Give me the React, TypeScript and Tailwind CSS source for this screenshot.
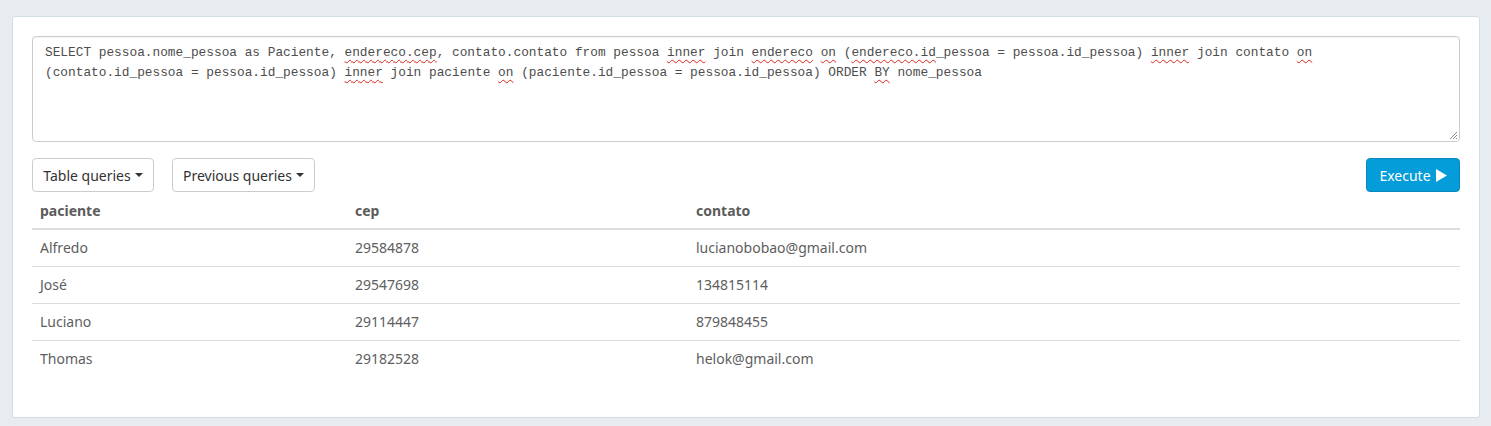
import { ReactNode } from 'react'

const rows = [
  { paciente: 'Alfredo', cep: '29584878', contato: 'lucianobobao@gmail.com' },
  { paciente: 'José', cep: '29547698', contato: '134815114' },
  { paciente: 'Luciano', cep: '29114447', contato: '879848455' },
  { paciente: 'Thomas', cep: '29182528', contato: 'helok@gmail.com' },
]

// palavras com sublinhado do corretor ortográfico
function W({ children }: { children: ReactNode }) {
  return (
    <span className="underline decoration-wavy decoration-[#e0261a] decoration-1 underline-offset-[3px]">
      {children}
    </span>
  )
}

function Caret() {
  return <span className="ml-1 inline-block h-0 w-0 border-x-[4px] border-t-[4px] border-x-transparent border-t-[#333] align-middle" />
}

export default function App() {
  return (
    <div
      className="min-h-[426px] bg-[#e7ecf0] pt-4 pr-[11px] pb-[10px] pl-3 text-[14px] text-[#5e5e5e]"
      style={{ fontFamily: '"Noto Sans", "Open Sans", sans-serif' }}
    >
      <div className="rounded-[3px] border border-[#d3dde4] bg-white px-[19px] pt-[19px] pb-[40px]">
        {/* editor SQL */}
        <div className="relative h-[106px] rounded-[4px] border border-[#cccccc] px-3 pt-[6px] shadow-[inset_0_1px_1px_rgba(0,0,0,0.05)]">
          <div
            className="whitespace-pre-wrap text-[12.8px] leading-[20px] text-[#4d4d4d]"
            style={{ fontFamily: '"Liberation Mono", "DejaVu Sans Mono", monospace' }}
          >
            SELECT pessoa.nome_pessoa as Paciente, <W>endereco.cep</W>, contato.contato from pessoa <W>inner</W> join{' '}
            <W>endereco</W> <W>on</W> (<W>endereco.id</W>_pessoa = pessoa.id_pessoa) <W>inner</W> join contato <W>on</W>
            {'\n'}(contato.id_pessoa = pessoa.id_pessoa) <W>inner</W> join paciente <W>on</W> (paciente.id_pessoa =
            pessoa.id_pessoa) ORDER <W>BY</W> nome_pessoa
          </div>
          <svg className="absolute right-[1px] bottom-[1px]" width="9" height="9" viewBox="0 0 9 9">
            <path d="M8 1 L1 8 M8 4 L4 8 M8 7 L7 8" stroke="#888" strokeWidth="1" />
          </svg>
        </div>

        {/* botões */}
        <div className="mt-4 flex items-center">
          <button className="flex h-[34px] w-[122px] items-center justify-center rounded-[4px] border border-[#cccccc] bg-white text-[14px] text-[#333]">
            Table queries
            <Caret />
          </button>
          <button className="ml-[18px] flex h-[34px] w-[143px] items-center justify-center rounded-[4px] border border-[#cccccc] bg-white text-[14px] text-[#333]">
            Previous queries
            <Caret />
          </button>
          <button className="ml-auto flex h-[34px] w-[94px] items-center justify-center gap-[5px] rounded-[4px] border border-[#0a87bd] bg-[#049cd9] text-[14px] text-white">
            Execute
            <svg width="11" height="13" viewBox="0 0 11 13">
              <path d="M0 0 L11 6.5 L0 13 Z" fill="white" />
            </svg>
          </button>
        </div>

        {/* resultado */}
        <table className="w-[1428px] border-collapse">
          <thead>
            <tr className="h-[37px] border-b-2 border-[#dddddd]">
              <th className="w-[315px] px-2 text-left font-bold text-[#5c5c5c]">paciente</th>
              <th className="w-[341px] px-2 text-left font-bold text-[#5c5c5c]">cep</th>
              <th className="px-2 text-left font-bold text-[#5c5c5c]">contato</th>
            </tr>
          </thead>
          <tbody>
            {rows.map((r, i) => (
              <tr key={r.paciente} className={`h-[37px] ${i > 0 ? 'border-t border-[#dddddd]' : ''}`}>
                <td className="px-2">{r.paciente}</td>
                <td className="px-2">{r.cep}</td>
                <td className="px-2">{r.contato}</td>
              </tr>
            ))}
          </tbody>
        </table>
      </div>
    </div>
  )
}
